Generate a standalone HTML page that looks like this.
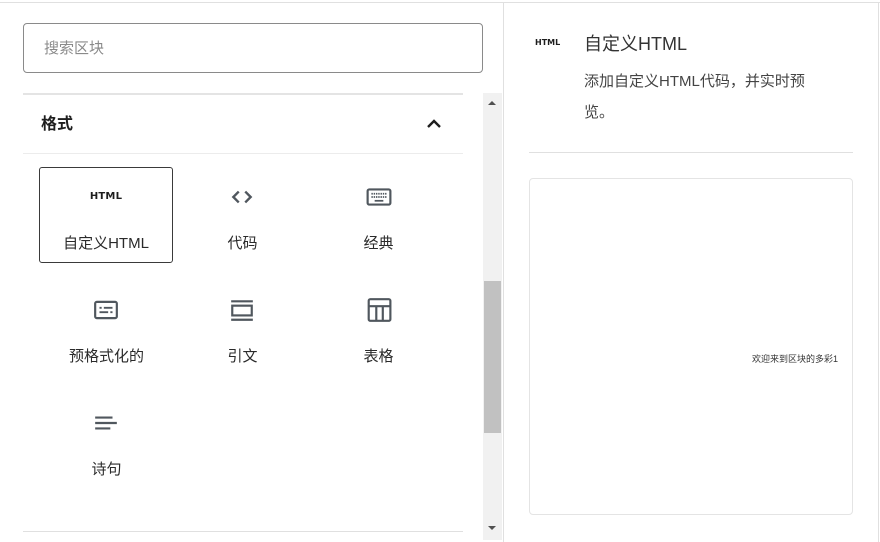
<!DOCTYPE html>
<html><head><meta charset="utf-8"><style>
*{box-sizing:border-box;margin:0;padding:0}
body{width:880px;height:542px;background:#fff;position:relative;overflow:hidden;font-family:"Liberation Sans","Noto Sans CJK SC",sans-serif;color:#1e1e1e}
.abs{position:absolute}
.item{position:absolute;width:133px;height:95px;text-align:center;font-size:15px;color:#2a2a2a}
.item svg{position:absolute;left:54px;top:17px}
.item .lb{position:absolute;left:0;right:0;top:66px;line-height:20px}
</style></head><body>
<div class="abs" style="left:0;top:2px;width:880px;height:1px;background:#e0e0e0"></div>
<div class="abs" style="left:503px;top:2px;width:1px;height:540px;background:#e0e0e0"></div>
<div class="abs" style="left:878px;top:2px;width:1px;height:540px;background:#e0e0e0"></div>
<div class="abs" style="left:23px;top:23px;width:460px;height:50px;border:1px solid #8a8a8a;border-radius:4px"></div>
<div class="abs" style="left:44px;top:39px;font-size:15px;color:#8a8a8a;line-height:20px">搜索区块</div>
<div class="abs" style="left:23px;top:93px;width:440px;height:2px;background:#e4e4e4"></div>
<div class="abs" style="left:41px;top:115px;font-size:16px;font-weight:bold;line-height:20px">格式</div>
<svg class="abs" style="left:425px;top:116px" width="18" height="14" viewBox="0 0 18 14"><path d="M3 11 L9 5 L15 11" fill="none" stroke="#1e1e1e" stroke-width="2.4"/></svg>
<div class="abs" style="left:23px;top:153px;width:440px;height:1px;background:#ececec"></div>
<div class="abs" style="left:23px;top:531px;width:440px;height:1px;background:#e0e0e0"></div>
<div class="abs" style="left:483px;top:93px;width:19px;height:447px;background:#f1f1f1"></div>
<div class="abs" style="left:484px;top:281px;width:17px;height:152px;background:#c1c1c1"></div>
<svg class="abs" style="left:487px;top:100px" width="10" height="6"><path d="M1 5 L5 1 L9 5Z" fill="#505050"/></svg>
<svg class="abs" style="left:487px;top:525px" width="10" height="6"><path d="M1 1 L5 5 L9 1Z" fill="#505050"/></svg>

<div class="item" style="left:39px;top:167px;border:1px solid #3a3a3a;border-radius:3px;width:134px;height:96px">
<div class="abs" style="left:0;right:0;top:23px;font-size:10px;font-weight:bold;letter-spacing:0.2px;font-family:'DejaVu Sans',sans-serif;color:#1e1e1e">HTML</div>
<div class="lb" style="top:66px">自定义HTML</div></div>
<div class="item" style="left:176px;top:168px">
<svg width="28" height="26" viewBox="0 0 24 24" style="left:52px;top:16px"><path d="M9 7 L4 12 L9 17 M15 7 L20 12 L15 17" fill="none" stroke="#50575e" stroke-width="2.2"/></svg>
<div class="lb">代码</div></div>
<div class="item" style="left:312px;top:168px">
<svg width="28" height="26" viewBox="0 0 24 24" style="left:53px;top:16px"><rect x="1.5" y="5" width="21" height="14" rx="1.5" fill="none" stroke="#50575e" stroke-width="2"/><path d="M5 9h14M5 12h14" stroke="#50575e" stroke-width="1.6" stroke-dasharray="1.3 0.8"/><path d="M8 15.5h8" stroke="#50575e" stroke-width="1.6"/></svg>
<div class="lb">经典</div></div>

<div class="item" style="left:40px;top:281px">
<svg width="28" height="26" viewBox="0 0 24 24" style="left:52px;top:16px"><rect x="2" y="4.5" width="20" height="15" rx="1.5" fill="none" stroke="#50575e" stroke-width="2"/><path d="M6 10h2M10 10h8M6 14h8M16 14h2" stroke="#50575e" stroke-width="1.8"/></svg>
<div class="lb">预格式化的</div></div>
<div class="item" style="left:176px;top:281px">
<svg width="28" height="26" viewBox="0 0 24 24" style="left:52px;top:16px"><path d="M2 4h20M2 21h20" stroke="#50575e" stroke-width="2"/><rect x="3" y="8" width="18" height="9" fill="none" stroke="#50575e" stroke-width="2"/></svg>
<div class="lb">引文</div></div>
<div class="item" style="left:312px;top:281px">
<svg width="28" height="26" viewBox="0 0 24 24" style="left:53px;top:16px"><rect x="2.5" y="2" width="20" height="20" rx="1.5" fill="none" stroke="#50575e" stroke-width="2"/><path d="M2.5 8.5h20M9.5 8.5v13M15.5 8.5v13" stroke="#50575e" stroke-width="2"/></svg>
<div class="lb">表格</div></div>

<div class="item" style="left:40px;top:394px">
<svg width="28" height="26" viewBox="0 0 24 24" style="left:52px;top:16px"><path d="M2 7h16M2 12h20M2 17h14" stroke="#50575e" stroke-width="2"/></svg>
<div class="lb">诗句</div></div>

<div class="abs" style="left:535px;top:38px;font-size:8px;font-weight:bold;font-family:'DejaVu Sans',sans-serif;color:#1e1e1e">HTML</div>
<div class="abs" style="left:584px;top:33px;font-size:18px;color:#333;line-height:22px">自定义HTML</div>
<div class="abs" style="left:584px;top:66px;width:245px;font-size:15px;color:#444;line-height:31px">添加自定义HTML代码，并实时预览。</div>
<div class="abs" style="left:529px;top:152px;width:324px;height:1px;background:#e0e0e0"></div>
<div class="abs" style="left:529px;top:178px;width:324px;height:337px;border:1px solid #e4e4e4;border-radius:4px"></div>
<div class="abs" style="left:752px;top:354px;font-size:9px;color:#333;line-height:11px">欢迎来到区块的多彩1</div>
</body></html>
